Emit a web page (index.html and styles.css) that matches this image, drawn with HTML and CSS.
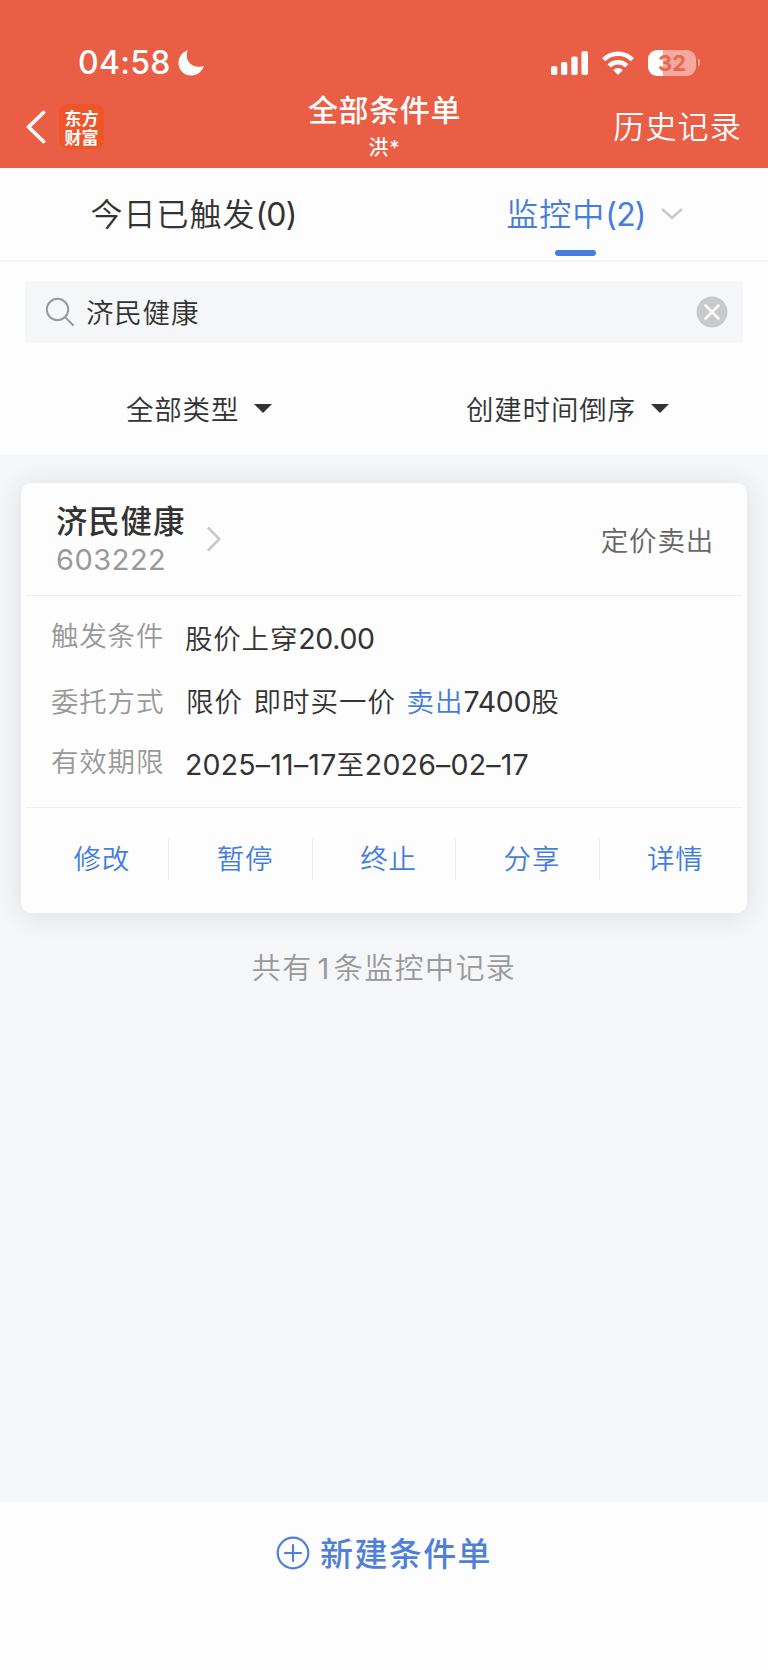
FILE: index.html
```html
<!DOCTYPE html>
<html lang="zh-CN">
<head>
  <meta charset="UTF-8" />
  <meta name="viewport" content="width=device-width, initial-scale=1.0" />
  <title>全部条件单</title>
  <link rel="stylesheet" href="styles.css">
</head>
<body>
  <!-- Header -->
  <header>
    <div class="status-bar">
      <div class="clock">
        <span>04:58</span>
        <svg class="moon" width="26" height="26" viewBox="0 0 26 26"><path fill="#fff" d="M9.6 0.8C9 2 8.700 3.600 8.700 5.300c0 6.600 5 11.500 11.500 11.500 2 0 3.600-.4 4.700-.9.500-.2.900.1.700.7C23.900 21.800 19.200 25.500 13.300 25.500 6 25.500.5 20 .5 12.900.5 7.300 3.800 2.500 8.800.4c.6-.3 1 0 .8.4z"/></svg>
      </div>
      <div class="status-icons">
        <svg width="38" height="24" viewBox="0 0 38 24" fill="#fff">
          <rect x="0" y="15" width="6.300" height="9" rx="1.800"/>
          <rect x="10" y="11" width="6.300" height="13" rx="1.800"/>
          <rect x="20.300" y="5.500" width="6.300" height="18.500" rx="1.800"/>
          <rect x="30.500" y="0" width="6.500" height="24" rx="1.800"/>
        </svg>
        <svg class="wifi" width="32" height="24" viewBox="0 0 32 24" fill="none" stroke="#fff" stroke-width="4.600">
          <path d="M1.600 8.600a20.500 20.500 0 0 1 28.800 0"/>
          <path d="M7.200 14.800a12.600 12.600 0 0 1 17.600 0"/>
          <path fill="#fff" stroke="none" d="M16 24l-4.900-5a7 7 0 0 1 9.800 0z"/>
        </svg>
        <div class="battery"><span>32</span></div>
        <i class="battery-tip"></i>
      </div>
    </div>
    <div class="title-bar">
      <div class="title-left">
        <svg width="20" height="34" viewBox="0 0 20 34" fill="none" stroke="#fff" stroke-width="3.800" stroke-linecap="round" stroke-linejoin="round"><path d="M17.500 2.500L2.500 17l15 14.500"/></svg>
        <div class="logo"><span>东方</span><span>财富</span></div>
      </div>
      <div class="title">
        <h1>全部条件单</h1>
        <p>洪*</p>
      </div>
      <a class="history">历史记录</a>
    </div>
  </header>

  <!-- Tabs -->
  <nav>
    <a class="tab"><span>今日已触发<span class="count">(0)</span></span></a>
    <a class="tab active"><span>监控中<span class="count">(2)</span></span>
      <svg width="22" height="12" viewBox="0 0 22 12" fill="none" stroke="#c8c8c8" stroke-width="2.500"><path d="M1 1l10 8.800L21 1"/></svg>
    </a>
  </nav>

  <!-- Search and filters -->
  <section class="tools">
    <div class="search">
      <svg width="30" height="30" viewBox="0 0 30 30" fill="none" stroke="#999" stroke-width="2"><circle cx="12.500" cy="12.500" r="10.700"/><path d="M20.100 20.100l8.600 8.600"/></svg>
      <span>济民健康</span>
      <svg class="clear" width="32" height="32" viewBox="0 0 32 32"><circle cx="16" cy="16" r="15.500" fill="#c9c9c9"/><path d="M9.500 9.500l13 13M22.500 9.500l-13 13" stroke="#fafafa" stroke-width="2.800" stroke-linecap="round"/></svg>
    </div>
    <div class="filters">
      <div class="filter">全部类型<i class="caret"></i></div>
      <div class="filter sort">创建时间倒序<i class="caret"></i></div>
    </div>
  </section>

  <!-- Order list -->
  <main>
    <article class="card">
      <div class="card-head">
        <div class="stock">
          <h2>济民健康</h2>
          <p>603222</p>
        </div>
        <svg width="14" height="26" viewBox="0 0 14 26" fill="none" stroke="#c8c8c8" stroke-width="2.600"><path d="M1 1.500L12.300 13 1 24.500"/></svg>
        <span class="kind">定价卖出</span>
      </div>
      <dl>
        <div class="row trigger"><dt>触发条件</dt><dd>股价上穿<span class="num">20.00</span></dd></div>
        <div class="row method"><dt>委托方式</dt><dd>限价 即时买一价 <em>卖出</em><span class="num">7400</span>股</dd></div>
        <div class="row expiry"><dt>有效期限</dt><dd><span class="num">2025–11–17</span>至<span class="num">2026–02–17</span></dd></div>
      </dl>
      <div class="actions">
        <a>修改</a>
        <a>暂停</a>
        <a>终止</a>
        <a>分享</a>
        <a>详情</a>
      </div>
    </article>
    <p class="total">共有<span>1</span>条监控中记录</p>
  </main>

  <!-- Bottom bar -->
  <footer>
    <a class="create">
      <svg width="34" height="34" viewBox="0 0 34 34" fill="none" stroke="#4f7fd9" stroke-width="2.200"><circle cx="17" cy="17" r="15.300"/><path d="M17 9v16M9 17h16" stroke-linecap="round"/></svg>
      <span>新建条件单</span>
    </a>
  </footer>
</body>
</html>
```
FILE: styles.css
```css
* {
  box-sizing: border-box;
  margin: 0;
  padding: 0;
}
body {
  display: flex;
  flex-direction: column;
  width: 768px;
  height: 1670px;
  font-family: Inter, "Noto Sans CJK SC", sans-serif;
  font-size: 27.5px;
  font-weight: 350;
  letter-spacing: 0.8px;
  color: #333;
  background-color: #f4f6f8;
}
svg {
  display: block;
  flex: none;
}
header {
  height: 168px;
  padding-top: 42px;
  color: #fff;
  background-color: #ea5e45;
}
.status-bar {
  display: flex;
  justify-content: space-between;
  align-items: center;
  height: 41px;
  padding: 0 68px 0 78px;
}
.clock {
  display: flex;
  align-items: center;
  gap: 7px;
  font-size: 32px;
  font-weight: 500;
  letter-spacing: 0.3px;
}
.status-icons {
  display: flex;
  align-items: center;
}
.wifi {
  margin: 0 14px 0 13px;
}
.battery {
  width: 48px;
  height: 26px;
  border-radius: 9px;
  background: linear-gradient(to right, #fff 15px, #f4a99c 15px);
  color: #e9664f;
  font-size: 22px;
  font-weight: 700;
  line-height: 27px;
  letter-spacing: 0;
  text-align: center;
}
.battery-tip {
  width: 2px;
  height: 7px;
  margin-left: 2px;
  border-radius: 0 3px 3px 0;
  background-color: #f4a99c;
}
.title-bar {
  display: grid;
  grid-template-columns: 1fr 200px 1fr;
  align-items: center;
  height: 85px;
  padding: 0 26px;
}
.title-left {
  display: flex;
  align-items: center;
  gap: 13px;
  padding-top: 2px;
}
.logo {
  display: flex;
  flex-direction: column;
  justify-content: center;
  width: 45px;
  height: 45px;
  border-radius: 9px;
  background-color: #ee5527;
  font-family: "Noto Sans CJK SC", sans-serif;
  font-size: 17px;
  font-weight: 700;
  line-height: 19px;
  letter-spacing: 0;
  text-align: center;
}
.title {
  padding: 5px 0 0 1px;
  text-align: center;
}
.title h1 {
  font-size: 30px;
  font-weight: 500;
  line-height: 36px;
  letter-spacing: 0.6px;
}
.title p {
  padding-top: 4px;
  font-size: 20px;
  font-weight: 500;
  line-height: 32px;
}
.history {
  justify-self: end;
  padding-bottom: 3px;
  font-size: 31px;
  letter-spacing: 1.2px;
}
nav {
  display: flex;
  height: 94px;
  border-bottom: 2px solid #f4f4f5;
  background-color: #fdfdfd;
  font-size: 32px;
  letter-spacing: 1px;
}
.tab {
  display: flex;
  justify-content: center;
  align-items: center;
  width: 384px;
  padding: 0 0 4px 3px;
}
.tab svg {
  margin-top: 4px;
}
.count {
  font-weight: 400;
  letter-spacing: -0.8px;
}
.tab.active {
  position: relative;
  gap: 15px;
  padding-left: 37px;
  color: #447ddd;
}
.tab.active::after {
  content: "";
  position: absolute;
  left: 171px;
  bottom: 4px;
  width: 41px;
  height: 6px;
  border-radius: 3px;
  background-color: #447ddd;
}
.tools {
  height: 193px;
  padding: 19px 25px 0;
  background-color: #fdfdfd;
}
.search {
  display: flex;
  align-items: center;
  height: 62px;
  padding: 0 15px 0 20px;
  border-radius: 4px;
  background-color: #f4f6f8;
}
.search span {
  flex: 1;
  margin-left: 11px;
  padding-bottom: 2px;
}
.filters {
  display: flex;
  height: 112px;
  padding: 18px 0 0 101px;
}
.filter {
  display: flex;
  align-items: center;
  width: 340px;
}
.caret {
  margin-left: 15px;
  border: 9px solid transparent;
  border-top-color: #333;
  border-bottom: none;
}
.sort {
  width: auto;
}
main {
  flex: 1;
  padding: 28px 21px 0;
}
.card {
  height: 430px;
  padding: 0 5px;
  border-radius: 10px;
  background-color: #fdfdfd;
  box-shadow: 0 3px 26px rgba(50, 50, 55, 0.12);
}
.card-head {
  display: flex;
  align-items: center;
  height: 113px;
  padding: 0 28px 0 30px;
  border-bottom: 1px solid #efeff0;
}
.stock {
  width: 151px;
  padding-top: 4px;
}
.stock h2 {
  font-size: 31.5px;
  font-weight: 500;
  line-height: 38px;
}
.stock p {
  font-size: 29px;
  font-weight: 400;
  line-height: 38px;
  letter-spacing: 0.5px;
  color: #999;
}
.kind {
  margin-left: auto;
  padding-bottom: 1px;
  color: #666;
}
dl {
  height: 212px;
  padding: 9px 25px 0;
  border-bottom: 1px solid #efeff0;
}
.row {
  display: flex;
  height: 63px;
  line-height: 63px;
}
dt {
  width: 134px;
  color: #999;
}
dd {
  padding-top: 2px;
}
.num {
  font-size: 28.5px;
  font-weight: 400;
  letter-spacing: -0.3px;
}
.method dt {
  width: 135px;
  padding-top: 3px;
}
.method dd {
  letter-spacing: 1px;
  word-spacing: 1.8px;
}
.expiry .num {
  letter-spacing: 0.2px;
}
em {
  font-style: normal;
  color: #447ddd;
}
.actions {
  display: flex;
  align-items: center;
  height: 102px;
}
.actions a {
  flex: 1;
  height: 41px;
  padding-left: 9px;
  border-right: 1px solid #ececee;
  line-height: 41px;
  text-align: center;
  color: #447ddd;
}
.actions a:last-child {
  border-right: none;
}
.total {
  margin-top: 35px;
  font-size: 29px;
  line-height: 42px;
  letter-spacing: 1.4px;
  text-align: center;
  color: #999;
}
.total span {
  margin: 0 3px 0 5px;
  font-weight: 400;
}
footer {
  height: 168px;
  padding-top: 27px;
  background-color: #fdfdfd;
}
.create {
  display: flex;
  justify-content: center;
  align-items: center;
  gap: 10px;
  height: 48px;
  font-size: 33px;
  font-weight: 500;
  letter-spacing: 1.4px;
  color: #4f7fd9;
}
.create span {
  padding-bottom: 2px;
}
```
